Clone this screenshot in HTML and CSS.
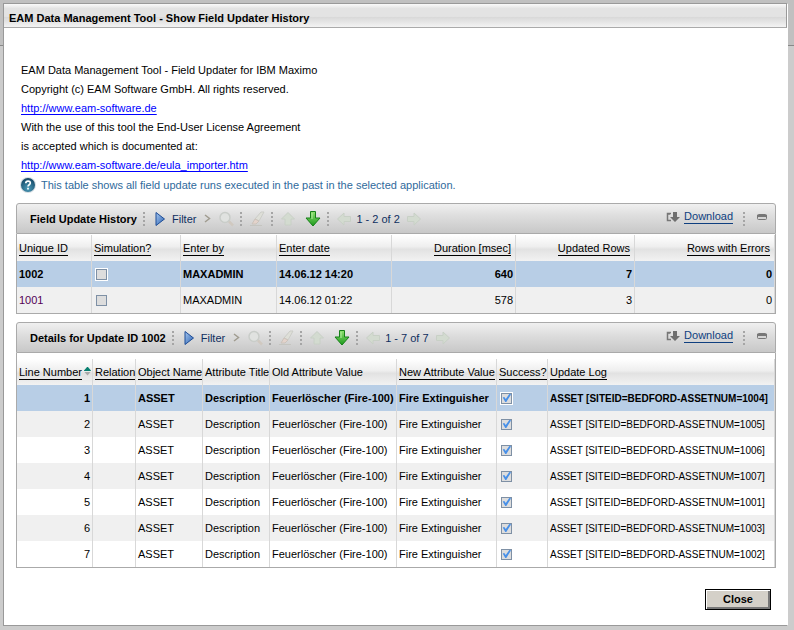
FILE: index.html
```html
<!DOCTYPE html>
<html lang="en">
<head>
<meta charset="utf-8">
<title>EAM Data Management Tool - Show Field Updater History</title>
<link rel="stylesheet" href="styles.css">
</head>
<body>
<svg class="defs" aria-hidden="true">
  <defs>
    <linearGradient id="blue" x1="0" y1="0" x2="1" y2="1"><stop offset="0" stop-color="#a8c8f0"/><stop offset="1" stop-color="#2860b0"/></linearGradient>
    <linearGradient id="green" x1="0" y1="0" x2="0" y2="1"><stop offset="0" stop-color="#8fe070"/><stop offset="1" stop-color="#1c9a1c"/></linearGradient>
    <radialGradient id="ball" cx=".5" cy=".75" r=".7"><stop offset="0" stop-color="#4c9cba"/><stop offset="1" stop-color="#154a68"/></radialGradient>
  </defs>
  <symbol id="play" viewBox="0 0 15 16"><path d="M3.500 1.500L12 8l-8.500 6.500z" fill="url(#blue)" stroke="#1d4c96"/></symbol>
  <symbol id="chevron" viewBox="0 0 10 16"><path d="M3 4l4.500 3.500L3 11" fill="none" stroke="#a09c90" stroke-width="1.500"/></symbol>
  <symbol id="search" viewBox="0 0 16 16"><circle cx="7" cy="6.500" r="5" fill="#e0e2e0" stroke="#c9cdc9" stroke-width="1.500"/><path d="M11 10.500l4 4" stroke="#d0c9c0" stroke-width="2.500"/></symbol>
  <symbol id="eraser" viewBox="0 0 16 16"><path d="M6 8l6-7h3l-5 9z" fill="#dedfd8" stroke="#cccdc8"/><path d="M6 8l4 2-3 3H3z" fill="#e4d3cb" stroke="#cbc3bb"/><path d="M1 14.500h12" stroke="#c5c5c0"/></symbol>
  <symbol id="up" viewBox="0 0 16 16"><path d="M8 1.500l6.500 6.500H11v6H5V8H1.500z" stroke-linejoin="round"/></symbol>
  <symbol id="down" viewBox="0 0 16 16"><path d="M5.500 .5h5V7h4.500L8 15 1 7h4.500z" fill="url(#green)" stroke="#168018" stroke-linejoin="round"/><path d="M7 2v6" stroke="#b5efa0"/></symbol>
  <symbol id="left" viewBox="0 0 16 16"><path d="M1.500 8L8 2v3.500h6.500v5H8V14z" stroke-linejoin="round"/></symbol>
  <symbol id="right" viewBox="0 0 16 16"><path d="M14.500 8L8 2v3.500H1.500v5H8V14z" stroke-linejoin="round"/></symbol>
  <symbol id="download" viewBox="0 0 14 12"><path d="M5 2.500H1.500v7H5M1 3h3" fill="none" stroke="#777" stroke-width="1.500"/><path d="M7 1h4v5h3l-5 5-5-5h3z" fill="#6e6e6e"/></symbol>
  <symbol id="minimize" viewBox="0 0 12 8"><rect x="1.500" y="1.500" width="9" height="5" rx="1" fill="#d4d4d4" stroke="#777"/><path d="M1 3h10" stroke="#777" stroke-width="2"/></symbol>
  <symbol id="help" viewBox="0 0 16 16"><circle cx="8" cy="8" r="8" fill="#d5dee3"/><circle cx="8" cy="8" r="7" fill="url(#ball)"/><path d="M5.800 6.300C5.800 3.300 10.300 3.400 10.300 6 10.300 7.800 8 7.600 8 9.600M8 10.800v1.700" fill="none" stroke="#fff" stroke-width="1.700"/></symbol>
</svg>

<main class="dialog">
  <h1 class="dialog-title">EAM Data Management Tool - Show Field Updater History</h1>
  <div class="content">
    <div class="intro">
      <p>EAM Data Management Tool - Field Updater for IBM Maximo</p>
      <p>Copyright (c) EAM Software GmbH. All rights reserved.</p>
      <p><a href="http://www.eam-software.de">http://www.eam-software.de</a></p>
      <p>With the use of this tool the End-User License Agreement</p>
      <p>is accepted which is documented at:</p>
      <p><a href="http://www.eam-software.de/eula_importer.htm">http://www.eam-software.de/eula_importer.htm</a></p>
    </div>
    <p class="hint"><svg class="icon"><use href="#help"/></svg>This table shows all field update runs executed in the past in the selected application.</p>

    <section class="panel">
      <header class="toolbar">
        <h2>Field Update History</h2>
        <i class="dots"></i>
        <button class="filter"><svg class="icon"><use href="#play"/></svg>Filter</button>
        <svg class="icon narrow"><use href="#chevron"/></svg>
        <button aria-label="Search" disabled><svg class="icon"><use href="#search"/></svg></button>
        <i class="dots"></i>
        <button aria-label="Clear" disabled><svg class="icon"><use href="#eraser"/></svg></button>
        <i class="dots"></i>
        <button class="pale" aria-label="Previous row" disabled><svg class="icon"><use href="#up"/></svg></button>
        <button class="next-row" aria-label="Next row"><svg class="icon"><use href="#down"/></svg></button>
        <i class="dots"></i>
        <div class="pager">
          <button class="pale" aria-label="Previous page" disabled><svg class="icon"><use href="#left"/></svg></button>
          <span>1 - 2 of 2</span>
        </div>
        <button class="pale" aria-label="Next page" disabled><svg class="icon"><use href="#right"/></svg></button>
        <div class="actions">
          <a href="#download"><svg class="download-icon"><use href="#download"/></svg><span>Download</span></a>
          <i class="dots"></i>
          <button aria-label="Minimize"><svg class="min-icon"><use href="#minimize"/></svg></button>
        </div>
      </header>
      <div class="table-box">
        <table class="history">
          <colgroup><col class="c-id"><col class="c-sim"><col class="c-by"><col class="c-date"><col class="c-duration"><col class="c-rows"><col></colgroup>
          <thead><tr><th><a href="#id">Unique ID</a></th><th><a href="#simulation">Simulation?</a></th><th><a href="#by">Enter by</a></th><th><a href="#date">Enter date</a></th><th class="num"><a href="#duration">Duration [msec]</a></th><th class="num"><a href="#rows">Updated Rows</a></th><th class="num"><a href="#errors">Rows with Errors</a></th></tr></thead>
          <tbody>
            <tr class="selected"><td>1002</td><td><input type="checkbox" aria-label="Simulation 1002"></td><td>MAXADMIN</td><td>14.06.12 14:20</td><td class="num">640</td><td class="num">7</td><td class="num">0</td></tr>
            <tr><td class="visited">1001</td><td><input type="checkbox" aria-label="Simulation 1001"></td><td>MAXADMIN</td><td>14.06.12 01:22</td><td class="num">578</td><td class="num">3</td><td class="num">0</td></tr>
          </tbody>
        </table>
      </div>
    </section>

    <section class="panel">
      <header class="toolbar">
        <h2>Details for Update ID 1002</h2>
        <i class="dots"></i>
        <button class="filter"><svg class="icon"><use href="#play"/></svg>Filter</button>
        <svg class="icon narrow"><use href="#chevron"/></svg>
        <button aria-label="Search" disabled><svg class="icon"><use href="#search"/></svg></button>
        <i class="dots"></i>
        <button aria-label="Clear" disabled><svg class="icon"><use href="#eraser"/></svg></button>
        <i class="dots"></i>
        <button class="pale" aria-label="Previous row" disabled><svg class="icon"><use href="#up"/></svg></button>
        <button class="next-row" aria-label="Next row"><svg class="icon"><use href="#down"/></svg></button>
        <i class="dots"></i>
        <div class="pager">
          <button class="pale" aria-label="Previous page" disabled><svg class="icon"><use href="#left"/></svg></button>
          <span>1 - 7 of 7</span>
        </div>
        <button class="pale" aria-label="Next page" disabled><svg class="icon"><use href="#right"/></svg></button>
        <div class="actions">
          <a href="#download"><svg class="download-icon"><use href="#download"/></svg><span>Download</span></a>
          <i class="dots"></i>
          <button aria-label="Minimize"><svg class="min-icon"><use href="#minimize"/></svg></button>
        </div>
      </header>
      <div class="table-box spaced">
        <table class="details">
          <colgroup><col class="c-line"><col class="c-relation"><col class="c-object"><col class="c-title"><col class="c-old"><col class="c-new"><col class="c-success"><col></colgroup>
          <thead><tr><th><a href="#line">Line Number</a><i class="sort"></i></th><th><a href="#relation">Relation</a></th><th><a href="#object">Object Name</a></th><th>Attribute Title</th><th>Old Attribute Value</th><th><a href="#new">New Attribute Value</a></th><th><a href="#success">Success?</a></th><th><a href="#log">Update Log</a></th></tr></thead>
          <tbody>
            <tr class="selected"><td class="num">1</td><td></td><td>ASSET</td><td>Description</td><td>Feuerlöscher (Fire-100)</td><td>Fire Extinguisher</td><td><input type="checkbox" checked aria-label="Success 1"></td><td class="log">ASSET [SITEID=BEDFORD-ASSETNUM=1004]</td></tr>
            <tr><td class="num">2</td><td></td><td>ASSET</td><td>Description</td><td>Feuerlöscher (Fire-100)</td><td>Fire Extinguisher</td><td><input type="checkbox" checked aria-label="Success 2"></td><td class="log">ASSET [SITEID=BEDFORD-ASSETNUM=1005]</td></tr>
            <tr><td class="num">3</td><td></td><td>ASSET</td><td>Description</td><td>Feuerlöscher (Fire-100)</td><td>Fire Extinguisher</td><td><input type="checkbox" checked aria-label="Success 3"></td><td class="log">ASSET [SITEID=BEDFORD-ASSETNUM=1006]</td></tr>
            <tr><td class="num">4</td><td></td><td>ASSET</td><td>Description</td><td>Feuerlöscher (Fire-100)</td><td>Fire Extinguisher</td><td><input type="checkbox" checked aria-label="Success 4"></td><td class="log">ASSET [SITEID=BEDFORD-ASSETNUM=1007]</td></tr>
            <tr><td class="num">5</td><td></td><td>ASSET</td><td>Description</td><td>Feuerlöscher (Fire-100)</td><td>Fire Extinguisher</td><td><input type="checkbox" checked aria-label="Success 5"></td><td class="log">ASSET [SITEID=BEDFORD-ASSETNUM=1001]</td></tr>
            <tr><td class="num">6</td><td></td><td>ASSET</td><td>Description</td><td>Feuerlöscher (Fire-100)</td><td>Fire Extinguisher</td><td><input type="checkbox" checked aria-label="Success 6"></td><td class="log">ASSET [SITEID=BEDFORD-ASSETNUM=1003]</td></tr>
            <tr><td class="num">7</td><td></td><td>ASSET</td><td>Description</td><td>Feuerlöscher (Fire-100)</td><td>Fire Extinguisher</td><td><input type="checkbox" checked aria-label="Success 7"></td><td class="log">ASSET [SITEID=BEDFORD-ASSETNUM=1002]</td></tr>
          </tbody>
        </table>
      </div>
    </section>

    <div class="footer"><button class="close">Close</button></div>
  </div>
</main>
</body>
</html>
```
FILE: styles.css
```css
* { box-sizing: border-box; }

body {
  margin: 0;
  padding: 3px 6px 4px 3px;
  background: #ccc linear-gradient(#c0c0c0 45px, #888 45px, #888 46px, #ccc 46px) no-repeat;
  font: 11px/19px "Liberation Sans", Arial, sans-serif;
  color: #000;
}

h1, h2, p { margin: 0; font-size: 11px; }
button { padding: 0; border: 0; background: none; font: inherit; color: inherit; }
svg { display: block; flex: none; }
.defs { position: absolute; width: 0; height: 0; }
.icon { width: 16px; height: 16px; }
.narrow { width: 10px; }

.dialog {
  background: #fff;
  border: 1px solid #999;
  border-right-color: #fff;
}

.dialog-title {
  height: 24px;
  padding-left: 5px;
  line-height: 28px;
  border-right: 1px solid #999;
  border-bottom: 1px solid #aaa;
  background: linear-gradient(#fafafa, #e3e3e3 20%, #e3e3e3 54%, #d9d9d9 58%, #f3f3f3);
}

.content { padding: 33px 11px 15px 12px; }
.intro { padding-left: 5px; }
.intro a { color: #00f; text-underline-offset: 2px; }

.hint {
  display: flex;
  align-items: center;
  gap: 5px;
  height: 21px;
  margin: 0 0 7px 4px;
  color: #2f6a9c;
}
.hint .icon { margin-bottom: 2px; }

.panel { margin-bottom: 8px; }

.toolbar {
  display: flex;
  align-items: center;
  gap: 6px;
  height: 31px;
  padding: 1px 7px 0 13px;
  border: 1px solid #aaa;
  border-radius: 3px 3px 0 0;
  background: linear-gradient(#f0f0f0, #dedede 40%, #c8c8c8);
  color: #0f2f5f;
  white-space: nowrap;
}
.toolbar h2 { color: #000; }

.dots {
  flex: none;
  width: 3px;
  height: 14px;
  border-right: 1px solid transparent;
  background: repeating-linear-gradient(#a5a5a5 0, #a5a5a5 2px, transparent 2px, transparent 4px) padding-box;
}

.filter, .pager { display: flex; align-items: center; gap: 4px; }
.next-row { margin-left: 3px; }
.pale .icon { fill: #d3dbd0; stroke: #c8d0c6; }

.actions { display: flex; align-items: center; gap: 10px; margin-left: auto; }
.actions a {
  display: flex;
  align-items: center;
  gap: 4px;
  padding-bottom: 4px;
  color: #0f3f7f;
  text-decoration: none;
}
.actions span { line-height: 13px; border-bottom: 1px solid; }
.download-icon { width: 14px; height: 12px; }
.min-icon { width: 12px; height: 8px; margin-bottom: 4px; }

.table-box { padding-top: 1px; border: solid #aaa; border-width: 0 1px 1px; }
.table-box.spaced { padding-top: 6px; }

table { width: 100%; table-layout: fixed; border-spacing: 0; }
th, td {
  height: 26px;
  padding: 0 2px;
  border-right: 1px solid #d8d8d8;
  line-height: 15px;
  text-align: left;
  white-space: nowrap;
}
th { font-weight: normal; }
th a { display: inline-block; line-height: 13px; border-bottom: 1px solid; color: inherit; text-decoration: none; }
th.num { padding-right: 4px; }
.num { text-align: right; }
.log { font-size: 10px; }
thead tr { background: linear-gradient(#fff, #eee 45%, #e2e2e2 55%, #f2f2f2); }
tbody tr:nth-child(even) { background: #f0f0f0; }
tbody .selected { background: #b8cee6; font-weight: bold; }
.visited { color: #505; }

.c-id { width: 75px; }
.c-sim { width: 89px; }
.c-by { width: 96px; }
.c-date { width: 115px; }
.c-duration { width: 124px; }
.c-rows { width: 119px; }
.c-line { width: 76px; }
.c-relation { width: 43px; }
.c-object { width: 67px; }
.c-title { width: 67px; }
.c-old { width: 127px; }
.c-new { width: 100px; }
.c-success { width: 51px; }

.sort {
  display: inline-block;
  width: 7px;
  height: 9px;
  margin-left: 2px;
  background: linear-gradient(#088070 4px, transparent 4px, transparent 5px, #aaa 5px);
  clip-path: polygon(50% 0, 100% 45%, 100% 55%, 50% 100%, 0 55%, 0 45%);
}

input {
  appearance: none;
  display: block;
  width: 11px;
  height: 11px;
  margin: 0 0 0 2px;
  border: 1px solid #7e90a5;
  background: #ddd;
}
.selected input { outline: 1px solid #fff; }
input:checked::before {
  content: "";
  display: block;
  width: 9px;
  height: 9px;
  background: #4890e8;
  clip-path: polygon(8% 45%, 25% 40%, 42% 62%, 85% 0, 100% 10%, 48% 95%, 36% 95%);
}

.footer { display: flex; justify-content: flex-end; padding: 13px 5px 0 0; }
.close {
  width: 66px;
  height: 21px;
  border: 1px solid #000;
  background: #d4d0c8;
  box-shadow: inset 1px 1px #fff, inset -2px -2px #777;
  font-weight: bold;
}
```
